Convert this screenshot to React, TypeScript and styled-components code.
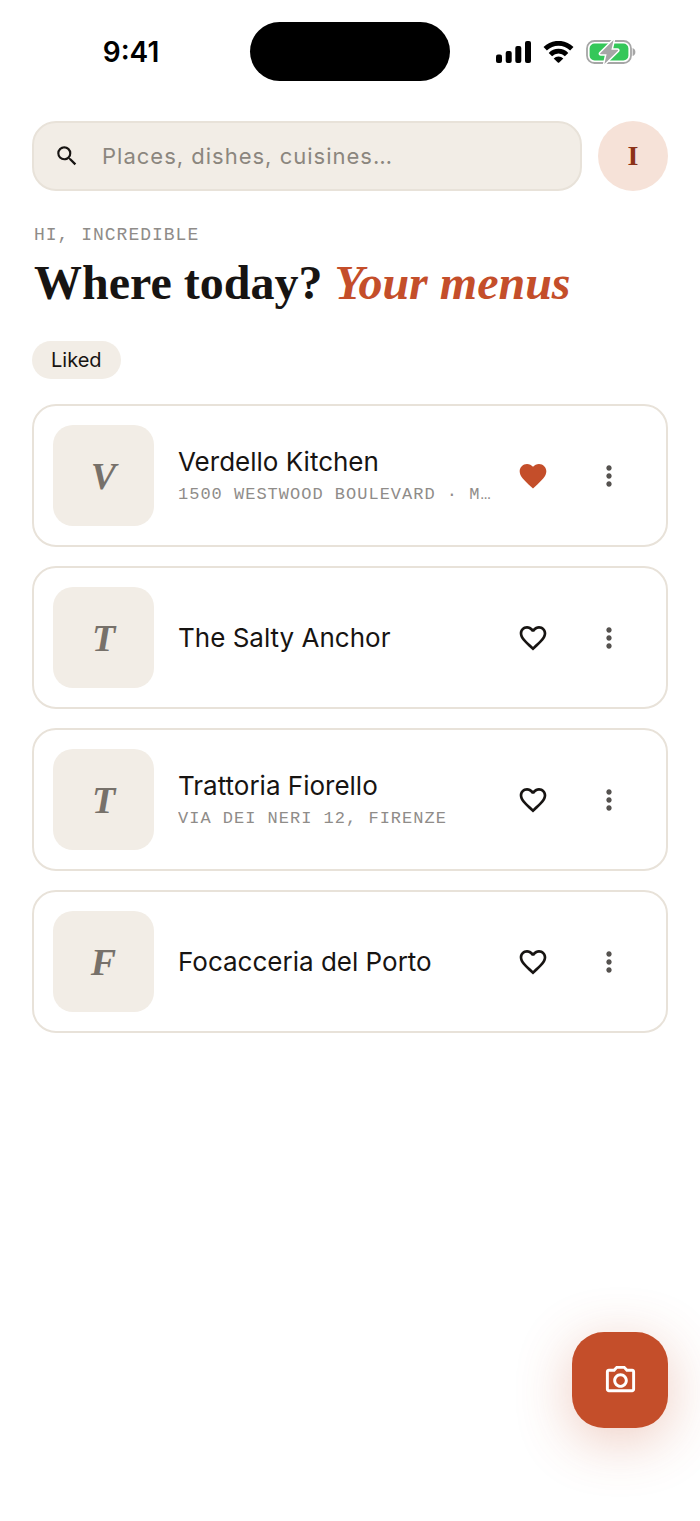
import React, { useState } from "react";
import styled, { createGlobalStyle } from "styled-components";
import {
  MdFavorite,
  MdFavoriteBorder,
  MdMoreVert,
  MdOutlinePhotoCamera,
  MdSearch,
} from "react-icons/md";

const color = {
  ink: "#171412",
  muted: "#8f8c89",
  sand: "#f2ede6",
  line: "#e8e2d9",
  rust: "#c44e2a",
  blush: "#f6e2d8",
  brick: "#8c3218",
};

const sans = `Inter, "Liberation Sans", sans-serif`;
const serif = `"Liberation Serif", serif`;
const mono = `"Liberation Mono", monospace`;

const GlobalStyle = createGlobalStyle`
  *, *::before, *::after { box-sizing: border-box; }
  body {
    margin: 0;
    background: #fff;
    color: ${color.ink};
    font-family: ${sans};
  }
  button, input { font: inherit; color: inherit; }
  button { border: 0; padding: 0; cursor: pointer; }
`;

const Screen = styled.div`
  min-height: 100vh;
  display: flex;
  flex-direction: column;
`;

const StatusBar = styled.div`
  display: grid;
  grid-template-columns: 1fr 200px 1fr;
  align-items: center;
  padding-top: 22px;
`;

const Clock = styled.time`
  padding-left: 12px;
  text-align: center;
  font-size: 28px;
  line-height: 32px;
  font-weight: 600;
  color: #000;
`;

const Island = styled.div`
  height: 59px;
  border-radius: 30px;
  background: #000;
`;

const Indicators = styled.div`
  display: flex;
  align-items: center;
  justify-content: center;
  gap: 12px;
  padding-right: 18px;
`;

const Main = styled.main`
  display: flex;
  flex-direction: column;
  padding: 40px 32px 32px;
`;

const TopRow = styled.div`
  display: flex;
  gap: 16px;
`;

const SearchBox = styled.label`
  flex: 1;
  min-width: 0;
  height: 70px;
  display: flex;
  align-items: center;
  gap: 22px;
  padding: 0 20px;
  border: 2px solid ${color.line};
  border-radius: 24px;
  background: ${color.sand};
  svg { flex: none; }
`;

const SearchInput = styled.input`
  flex: 1;
  min-width: 0;
  border: 0;
  padding: 0;
  outline: 0;
  background: none;
  font-size: 22px;
  line-height: 32px;
  letter-spacing: 1px;
  &::placeholder { color: #8b867e; opacity: 1; }
`;

const Avatar = styled.button`
  width: 70px;
  height: 70px;
  border-radius: 50%;
  background: ${color.blush};
  color: ${color.brick};
  font-family: ${serif};
  font-size: 28px;
  font-weight: 700;
`;

const Meta = styled.p`
  margin: 0;
  overflow: hidden;
  text-overflow: ellipsis;
  white-space: nowrap;
  font-family: ${mono};
  font-size: 17px;
  line-height: 28px;
  letter-spacing: 1px;
  text-transform: uppercase;
  color: ${color.muted};
`;

const Heading = styled.header`
  padding: 32px 2px 0;
`;

const Greeting = styled(Meta)`
  font-size: 18px;
  line-height: 24px;
`;

const Title = styled.h1`
  margin: 0;
  font-family: ${serif};
  font-size: 48px;
  line-height: 72px;
  font-weight: 700;
  em { color: ${color.rust}; }
`;

const Filters = styled.div`
  display: flex;
  margin-top: 22px;
`;

const Chip = styled.button`
  height: 38px;
  padding: 0 19px;
  border-radius: 19px;
  background: ${color.sand};
  font-size: 20px;
  line-height: 24px;
`;

const List = styled.ul`
  display: flex;
  flex-direction: column;
  gap: 19px;
  margin: 25px 0 0;
  padding: 0;
  list-style: none;
`;

const Card = styled.li`
  display: flex;
  align-items: center;
  padding: 19px;
  border: 2px solid ${color.line};
  border-radius: 24px;
`;

const Thumb = styled.div`
  flex: none;
  width: 101px;
  height: 101px;
  display: grid;
  place-items: center;
  border-radius: 20px;
  background: ${color.sand};
  color: #77716a;
  font-family: ${serif};
  font-size: 38px;
  font-style: italic;
  font-weight: 700;
`;

const Info = styled.div`
  flex: 1;
  min-width: 0;
  padding-left: 24px;
`;

const Name = styled.h2`
  margin: 0;
  font-size: 26px;
  line-height: 38px;
  font-weight: 400;
`;

const IconButton = styled.button<{ $tint: string }>`
  flex: none;
  width: 76px;
  height: 76px;
  display: grid;
  place-items: center;
  background: none;
  color: ${(p) => p.$tint};
`;

const CameraButton = styled.button`
  position: fixed;
  right: 32px;
  bottom: 93px;
  width: 96px;
  height: 96px;
  display: grid;
  place-items: center;
  border-radius: 32px;
  background: ${color.rust};
  color: #fff;
  box-shadow: 0 12px 56px rgba(196, 78, 42, 0.3);
`;

const Signal = () => (
  <svg width="35" height="22" viewBox="0 0 35 22" aria-hidden="true">
    <rect x="0" y="13.5" width="6" height="8.5" rx="2" />
    <rect x="9.7" y="10" width="6" height="12" rx="2" />
    <rect x="19.3" y="5" width="6" height="17" rx="2" />
    <rect x="29" y="0" width="6" height="22" rx="2" />
  </svg>
);

const Wifi = () => (
  <svg width="31" height="22" viewBox="0 0 30 22" aria-hidden="true">
    <g fill="none" stroke="#000" strokeWidth="4.8">
      <path d="M1.7 7.7 A19 19 0 0 1 28.3 7.7" />
      <path d="M6.9 13.6 A11.4 11.4 0 0 1 23.1 13.6" />
    </g>
    <path d="M10.2 17.4 A6.8 6.8 0 0 1 19.8 17.4 L15.7 21.4 Q15 22 14.3 21.4 Z" />
  </svg>
);

const Battery = () => (
  <svg width="50" height="26" viewBox="0 0 50 26" aria-hidden="true">
    <rect x="1" y="2" width="44" height="22" rx="7.5" fill="none" stroke="#a6a6a6" strokeWidth="1.8" />
    <path d="M46.6 9 Q49.4 10 49.4 13 Q49.4 16 46.6 17 Z" fill="#a6a6a6" />
    <rect x="3.6" y="4.6" width="38.8" height="16.8" rx="5" fill="#34c759" />
    <path
      d="M27.6 1 L14.2 14.3 Q13.8 15.2 14.8 15.2 H20.6 L18.4 25 L32 11.7 Q32.4 10.8 31.4 10.8 H25.4 Z"
      fill="#a6a6a6"
      stroke="#fff"
      strokeWidth="3"
      strokeLinejoin="round"
      paintOrder="stroke"
    />
  </svg>
);

interface Place {
  name: string;
  address?: string;
  liked: boolean;
}

const initialPlaces: Place[] = [
  { name: "Verdello Kitchen", address: "1500 Westwood Boulevard · M…", liked: true },
  { name: "The Salty Anchor", liked: false },
  { name: "Trattoria Fiorello", address: "Via dei Neri 12, Firenze", liked: false },
  { name: "Focacceria del Porto", liked: false },
];

export default function App() {
  const [places, setPlaces] = useState(initialPlaces);
  const toggle = (name: string) =>
    setPlaces((all) => all.map((p) => (p.name === name ? { ...p, liked: !p.liked } : p)));

  return (
    <Screen>
      <GlobalStyle />
      <StatusBar>
        <Clock>9:41</Clock>
        <Island />
        <Indicators>
          <Signal />
          <Wifi />
          <Battery />
        </Indicators>
      </StatusBar>
      <Main>
        <TopRow>
          <SearchBox>
            <MdSearch size={26} />
            <SearchInput type="text" placeholder="Places, dishes, cuisines…" />
          </SearchBox>
          <Avatar>I</Avatar>
        </TopRow>
        <Heading>
          <Greeting>Hi, Incredible</Greeting>
          <Title>
            Where today? <em>Your menus</em>
          </Title>
        </Heading>
        <Filters>
          <Chip>Liked</Chip>
        </Filters>
        <List>
          {places.map((place) => (
            <Card key={place.name}>
              <Thumb>{place.name[0]}</Thumb>
              <Info>
                <Name>{place.name}</Name>
                {place.address && <Meta>{place.address}</Meta>}
              </Info>
              <IconButton
                $tint={place.liked ? color.rust : color.ink}
                aria-label="Like"
                aria-pressed={place.liked}
                onClick={() => toggle(place.name)}
              >
                {place.liked ? <MdFavorite size={32} /> : <MdFavoriteBorder size={32} />}
              </IconButton>
              <IconButton $tint="#55524f" aria-label="More">
                <MdMoreVert size={32} />
              </IconButton>
            </Card>
          ))}
        </List>
      </Main>
      <CameraButton aria-label="Scan a menu">
        <MdOutlinePhotoCamera size={35} />
      </CameraButton>
    </Screen>
  );
}
